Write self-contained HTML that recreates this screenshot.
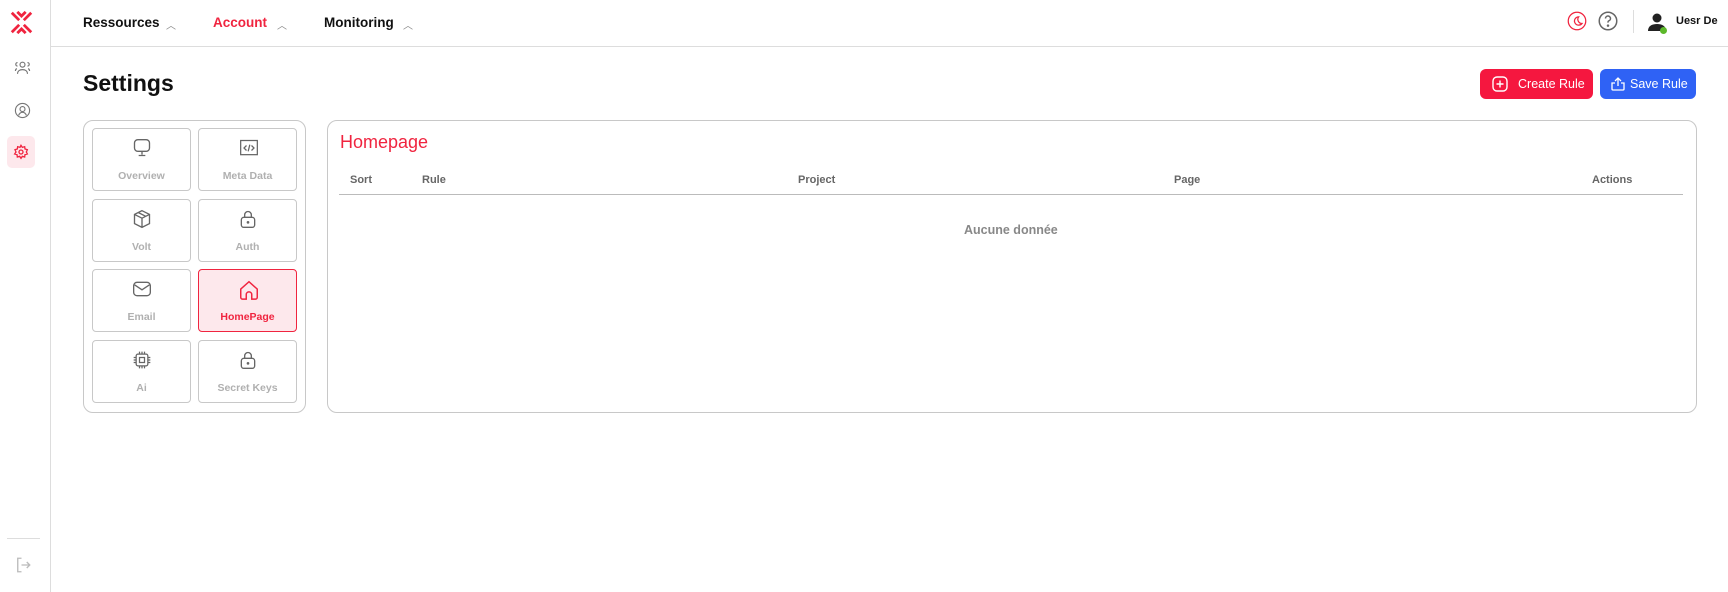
<!DOCTYPE html>
<html><head><meta charset="utf-8"><style>
*{margin:0;padding:0;box-sizing:border-box}
body{width:1728px;height:592px;background:#fff;font-family:"Liberation Sans",sans-serif;position:relative;overflow:hidden;color:#111}
.a{position:absolute}
.side{left:0;top:0;width:51px;height:592px;border-right:1px solid #ddd}
.top{left:51px;top:0;right:0;height:47px;border-bottom:1px solid #ddd}
.nav{top:15px;font-size:13.5px;font-weight:bold}
.car{top:17px;font-size:10px;color:#888}
.panel{border:1px solid #c8c8c8;border-radius:10px}
.tile{width:99px;height:63px;border:1px solid #c8c8c8;border-radius:4px;text-align:center;font-size:10.5px;color:#b0b0b0;font-weight:bold}
.tile svg{position:absolute;left:39px;top:9px}
.tile span{position:absolute;left:0;right:0;top:41px}
.th{top:174px;font-size:11px;color:#666;font-weight:bold}
.btn{top:69px;height:30px;border-radius:6px;color:#fff;font-size:12.5px;line-height:30px}
</style></head><body>
<div class="a side"></div>
<div class="a top"></div>
<!-- logo -->
<svg class="a" style="left:9px;top:10px" width="25" height="25" viewBox="0 0 27 27" fill="none" stroke="#f0243f" stroke-width="3"><path d="M3 3l8 8M24 3l-8 8M3 24l8-8M24 24l-8-8M9 2l4.5 4.5L18 2M9 25l4.5-4.5L18 25"/></svg>
<svg class="a" style="left:14px;top:59px" width="17" height="17" viewBox="0 0 24 24" fill="none" stroke="#777" stroke-width="1.6"><circle cx="12" cy="8" r="3.5"/><path d="M5 21c0-4 3-6 7-6s7 2 7 6M5 5a2.5 2.5 0 0 0 0 5M19 5a2.5 2.5 0 0 1 0 5M2 17c0-2 1-3 2-3.5M22 17c0-2-1-3-2-3.5"/></svg>
<svg class="a" style="left:14px;top:102px" width="17" height="17" viewBox="0 0 24 24" fill="none" stroke="#777" stroke-width="1.6"><circle cx="12" cy="12" r="10"/><circle cx="12" cy="10" r="3.5"/><path d="M6.5 19c1-3 3-4.5 5.5-4.5s4.5 1.5 5.5 4.5"/></svg>
<div class="a" style="left:7px;top:136px;width:28px;height:32px;background:#fde8ec;border-radius:5px"></div>
<svg class="a" style="left:13px;top:144px" width="16" height="16" viewBox="0 0 24 24" fill="none" stroke="#f0243f" stroke-width="2"><circle cx="12" cy="12" r="3"/><path d="M12 2l2 3 3.5-1 .5 3.5 3.5 1-1.5 3.5 1.5 3-3.5 1-.5 3.5-3.5-1-2 3-2-3-3.5 1-.5-3.5-3.5-1L4.5 12 3 8.5l3.5-1L7 4l3.5 1z"/></svg>
<div class="a" style="left:7px;top:538px;width:33px;height:1px;background:#ddd"></div>
<svg class="a" style="left:14px;top:556px" width="18" height="18" viewBox="0 0 24 24" fill="none" stroke="#bbb" stroke-width="1.8"><path d="M10 3H5v18h5M10 12h11M17 8l4 4-4 4"/></svg>
<!-- nav -->
<div class="a nav" style="left:83px">Ressources</div><div class="a car" style="left:166px">︿</div>
<div class="a nav" style="left:213px;color:#f0243f">Account</div><div class="a car" style="left:277px">︿</div>
<div class="a nav" style="left:324px">Monitoring</div><div class="a car" style="left:403px">︿</div>
<svg class="a" style="left:1567px;top:11px" width="20" height="20" viewBox="0 0 24 24" fill="none" stroke="#f0243f" stroke-width="1.5"><circle cx="12" cy="12" r="10.5"/><path d="M14 7a5 5 0 1 0 4 8 5 5 0 0 1-4-8z"/></svg>
<svg class="a" style="left:1598px;top:11px" width="20" height="20" viewBox="0 0 24 24" fill="none" stroke="#666" stroke-width="1.8"><circle cx="12" cy="12" r="10.5"/><path d="M9 9a3 3 0 1 1 4 2.8c-.7.3-1 .8-1 1.5V14"/><circle cx="12" cy="17.5" r=".6" fill="#666"/></svg>
<div class="a" style="left:1633px;top:10px;width:1px;height:23px;background:#ddd"></div>
<svg class="a" style="left:1647px;top:12px" width="20" height="20" viewBox="0 0 20 20"><circle cx="10" cy="6" r="4.5" fill="#222"/><path d="M1 19c0-5 4-7 9-7s9 2 9 7z" fill="#222"/></svg>
<div class="a" style="left:1660px;top:27px;width:7px;height:7px;border-radius:50%;background:#5cb82a"></div>
<div class="a" style="left:1676px;top:15px;font-size:11px;font-weight:bold">Uesr De</div>
<!-- title -->
<div class="a" style="left:83px;top:70px;font-size:23px;font-weight:bold">Settings</div>
<div class="a btn" style="left:1480px;width:113px;background:#f5173f"><svg style="position:absolute;left:12px;top:7px" width="16" height="16" viewBox="0 0 16 16" fill="none" stroke="#fff" stroke-width="1.4"><rect x="1" y="1" width="14" height="14" rx="4"/><path d="M8 4.5v7M4.5 8h7"/></svg><span style="position:absolute;left:38px">Create Rule</span></div>
<div class="a btn" style="left:1600px;width:96px;background:#2f62f5"><svg style="position:absolute;left:10px;top:8px" width="16" height="14" viewBox="0 0 16 14" fill="none" stroke="#fff" stroke-width="1.3"><path d="M5 6H2v6a1 1 0 0 0 1 1h10a1 1 0 0 0 1-1V6h-3M8 9V1M5 4l3-3 3 3"/></svg><span style="position:absolute;left:30px">Save Rule</span></div>
<!-- left panel -->
<div class="a panel" style="left:83px;top:120px;width:223px;height:293px"></div>
<div class="a tile" style="left:92px;top:128px"><svg width="20" height="20" viewBox="0 0 24 24" fill="none" stroke="#666" stroke-width="1.6"><rect x="3" y="2" width="18" height="14" rx="4"/><path d="M12 16v4M8 21h8"/></svg><span>Overview</span></div>
<div class="a tile" style="left:198px;top:128px"><svg width="22" height="20" viewBox="0 0 24 24" fill="none" stroke="#666" stroke-width="1.5"><rect x="2" y="3" width="20" height="17"/><path d="M9 9l-3 3 3 3M15 9l3 3-3 3M13 8l-2 8"/></svg><span>Meta Data</span></div>
<div class="a tile" style="left:92px;top:199px"><svg width="20" height="20" viewBox="0 0 24 24" fill="none" stroke="#666" stroke-width="1.6"><path d="M12 2l9 4.5v11L12 22l-9-4.5v-11zM3 6.5L12 11l9-4.5M12 11v11M7.5 4.2l9 4.6"/></svg><span>Volt</span></div>
<div class="a tile" style="left:198px;top:199px"><svg width="20" height="20" viewBox="0 0 24 24" fill="none" stroke="#666" stroke-width="1.6"><rect x="4" y="10" width="16" height="12" rx="3"/><path d="M8 10V7a4 4 0 0 1 8 0v3"/><circle cx="12" cy="16" r=".8" fill="#666"/></svg><span>Auth</span></div>
<div class="a tile" style="left:92px;top:269px"><svg width="20" height="20" viewBox="0 0 24 24" fill="none" stroke="#666" stroke-width="1.6"><rect x="2" y="4" width="20" height="16" rx="4"/><path d="M3 7l9 6 9-6"/></svg><span>Email</span></div>
<div class="a tile" style="left:198px;top:269px;background:#fde8ec;border-color:#f0243f;color:#f0243f"><svg width="22" height="22" viewBox="0 0 24 24" fill="none" stroke="#f0243f" stroke-width="1.6"><path d="M3 11l9-8 9 8v9a2 2 0 0 1-2 2h-4v-5a3 3 0 0 0-6 0v5H5a2 2 0 0 1-2-2z"/></svg><span style="font-weight:bold">HomePage</span></div>
<div class="a tile" style="left:92px;top:340px"><svg width="20" height="20" viewBox="0 0 24 24" fill="none" stroke="#666" stroke-width="1.5"><rect x="5" y="5" width="14" height="14" rx="2"/><rect x="9" y="9" width="6" height="6"/><path d="M9 2v3M12 2v3M15 2v3M9 19v3M12 19v3M15 19v3M2 9h3M2 12h3M2 15h3M19 9h3M19 12h3M19 15h3"/></svg><span>Ai</span></div>
<div class="a tile" style="left:198px;top:340px"><svg width="20" height="20" viewBox="0 0 24 24" fill="none" stroke="#666" stroke-width="1.6"><rect x="4" y="10" width="16" height="12" rx="3"/><path d="M8 10V7a4 4 0 0 1 8 0v3"/><circle cx="12" cy="16" r=".8" fill="#666"/></svg><span>Secret Keys</span></div>
<!-- right panel -->
<div class="a panel" style="left:327px;top:120px;width:1370px;height:293px"></div>
<div class="a" style="left:340px;top:132px;font-size:18px;color:#f0243f">Homepage</div>
<div class="a th" style="left:350px">Sort</div>
<div class="a th" style="left:422px">Rule</div>
<div class="a th" style="left:798px">Project</div>
<div class="a th" style="left:1174px">Page</div>
<div class="a th" style="left:1592px">Actions</div>
<div class="a" style="left:339px;top:194px;width:1344px;height:1px;background:#bbb"></div>
<div class="a" style="left:964px;top:223px;font-size:12.5px;color:#888;font-weight:bold">Aucune donnée</div>
</body></html>
